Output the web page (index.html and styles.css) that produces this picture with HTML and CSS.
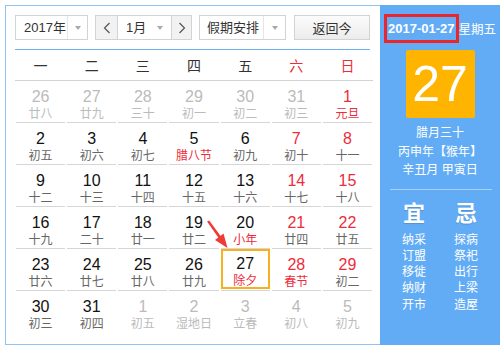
FILE: index.html
```html
<!DOCTYPE html>
<html lang="zh-CN">
<head>
    <meta charset="UTF-8">
    <meta name="viewport" content="width=device-width, initial-scale=1.0">
    <title>万年历</title>
    <link rel="stylesheet" href="styles.css">
</head>
<body>
    <div class="calendar">
        <!-- Left: month view -->
        <div class="main">
            <div class="toolbar">
                <div class="select year">
                    <span class="value">2017年</span>
                    <span class="arrow"><i class="tri"></i></span>
                </div>
                <div class="select month">
                    <span class="step prev">
                        <svg width="8" height="12" viewBox="0 0 8 12"><polyline points="6.5,1 1.5,6 6.5,11" fill="none" stroke="#555" stroke-width="1.2"/></svg>
                    </span>
                    <span class="value">1月</span>
                    <span class="arrow plain"><i class="tri"></i></span>
                    <span class="step next">
                        <svg width="8" height="12" viewBox="0 0 8 12"><polyline points="1.5,1 6.5,6 1.5,11" fill="none" stroke="#555" stroke-width="1.2"/></svg>
                    </span>
                </div>
                <div class="select holiday">
                    <span class="value">假期安排</span>
                    <span class="arrow"><i class="tri"></i></span>
                </div>
                <button class="today-btn">返回今</button>
            </div>
            <div class="rule"></div>

            <div class="weekdays">
                <span>一</span><span>二</span><span>三</span><span>四</span><span>五</span>
                <span class="red">六</span><span class="red">日</span>
            </div>

            <div class="days">
                <div class="cell other"><div class="num">26</div><div class="lunar">廿八</div></div>
                <div class="cell other"><div class="num">27</div><div class="lunar">廿九</div></div>
                <div class="cell other"><div class="num">28</div><div class="lunar">三十</div></div>
                <div class="cell other"><div class="num">29</div><div class="lunar">初一</div></div>
                <div class="cell other"><div class="num">30</div><div class="lunar">初二</div></div>
                <div class="cell other"><div class="num">31</div><div class="lunar">初三</div></div>
                <div class="cell weekend"><div class="num">1</div><div class="lunar fest">元旦</div></div>

                <div class="cell"><div class="num">2</div><div class="lunar">初五</div></div>
                <div class="cell"><div class="num">3</div><div class="lunar">初六</div></div>
                <div class="cell"><div class="num">4</div><div class="lunar">初七</div></div>
                <div class="cell"><div class="num">5</div><div class="lunar fest">腊八节</div></div>
                <div class="cell"><div class="num">6</div><div class="lunar">初九</div></div>
                <div class="cell weekend"><div class="num">7</div><div class="lunar">初十</div></div>
                <div class="cell weekend"><div class="num">8</div><div class="lunar">十一</div></div>

                <div class="cell"><div class="num">9</div><div class="lunar">十二</div></div>
                <div class="cell"><div class="num">10</div><div class="lunar">十三</div></div>
                <div class="cell"><div class="num">11</div><div class="lunar">十四</div></div>
                <div class="cell"><div class="num">12</div><div class="lunar">十五</div></div>
                <div class="cell"><div class="num">13</div><div class="lunar">十六</div></div>
                <div class="cell weekend"><div class="num">14</div><div class="lunar">十七</div></div>
                <div class="cell weekend"><div class="num">15</div><div class="lunar">十八</div></div>

                <div class="cell"><div class="num">16</div><div class="lunar">十九</div></div>
                <div class="cell"><div class="num">17</div><div class="lunar">二十</div></div>
                <div class="cell"><div class="num">18</div><div class="lunar">廿一</div></div>
                <div class="cell"><div class="num">19</div><div class="lunar">廿二</div></div>
                <div class="cell"><div class="num">20</div><div class="lunar fest">小年</div></div>
                <div class="cell weekend"><div class="num">21</div><div class="lunar">廿四</div></div>
                <div class="cell weekend"><div class="num">22</div><div class="lunar">廿五</div></div>

                <div class="cell"><div class="num">23</div><div class="lunar">廿六</div></div>
                <div class="cell"><div class="num">24</div><div class="lunar">廿七</div></div>
                <div class="cell"><div class="num">25</div><div class="lunar">廿八</div></div>
                <div class="cell"><div class="num">26</div><div class="lunar">廿九</div></div>
                <div class="cell today"><div class="box"><div class="num">27</div><div class="lunar fest">除夕</div></div></div>
                <div class="cell weekend"><div class="num">28</div><div class="lunar fest">春节</div></div>
                <div class="cell weekend"><div class="num">29</div><div class="lunar">初二</div></div>

                <div class="cell"><div class="num">30</div><div class="lunar">初三</div></div>
                <div class="cell"><div class="num">31</div><div class="lunar">初四</div></div>
                <div class="cell other"><div class="num">1</div><div class="lunar">初五</div></div>
                <div class="cell other"><div class="num">2</div><div class="lunar">湿地日</div></div>
                <div class="cell other"><div class="num">3</div><div class="lunar">立春</div></div>
                <div class="cell other"><div class="num">4</div><div class="lunar">初八</div></div>
                <div class="cell other"><div class="num">5</div><div class="lunar">初九</div></div>
            </div>
        </div>

        <!-- Right: selected day -->
        <div class="side">
            <div class="date-row">
                <span class="date">2017-01-27</span><span class="week">星期五</span>
            </div>
            <div class="day-big">27</div>
            <div class="lunar-info">
                <div>腊月三十</div>
                <div>丙申年【猴年】</div>
                <div>辛丑月 甲寅日</div>
            </div>
            <div class="divider"></div>
            <div class="yiji">
                <div class="col">
                    <div class="head">宜</div>
                    <div class="items">纳采<br>订盟<br>移徙<br>纳财<br>开市</div>
                </div>
                <div class="col">
                    <div class="head">忌</div>
                    <div class="items">探病<br>祭祀<br>出行<br>上梁<br>造屋</div>
                </div>
            </div>
        </div>
    </div>

    <!-- Annotation arrow pointing at today -->
    <svg class="pointer" width="500" height="350" viewBox="0 0 500 350">
        <polygon points="207,221.5 209.2,220.5 221,236.5 218.6,237.9" fill="#ee3b35"/>
        <polygon points="227.5,248 215,240 223.5,233.5" fill="#ee3b35"/>
    </svg>
</body>
</html>
```

FILE: styles.css
```css
body {
    margin: 0;
    padding: 5px 0 0 5px;
    background-color: #fff;
    font-family: "Liberation Sans", "Noto Sans CJK SC", sans-serif;
    color: #222;
}

.calendar {
    display: flex;
    width: 495px;
    height: 340px;
}

/* Left month view */
.main {
    width: 375px;
    box-sizing: border-box;
    border: 1px solid #8fc3f2;
    border-right: none;
    padding: 9px 7px 0 9px;
}

.toolbar {
    display: flex;
    height: 25px;
}

.select {
    display: flex;
    height: 25px;
    box-sizing: border-box;
    border: 1px solid #d3d3d3;
    background-color: #fff;
    font-size: 13px;
    color: #333;
    white-space: nowrap;
}

.select .value {
    flex: 1;
    line-height: 23px;
}

.select .arrow {
    display: flex;
    align-items: center;
    justify-content: center;
    flex-shrink: 0;
    border-left: 1px solid #e6e6e6;
}

.select .arrow.plain {
    border-left: none;
}

.tri {
    width: 0;
    height: 0;
    border-left: 3.5px solid transparent;
    border-right: 3.5px solid transparent;
    border-top: 4px solid #a8a8a8;
}

.year {
    width: 73px;
    margin-right: 7px;
}

.year .value {
    padding-left: 8px;
}

.year .arrow {
    width: 19px;
}

.month {
    width: 97px;
    margin-right: 7px;
}

.month .step {
    display: flex;
    align-items: center;
    justify-content: center;
    background-color: #f2f2f2;
}

.month .prev {
    width: 21px;
    border-right: 1px solid #d3d3d3;
}

.month .next {
    width: 19px;
    border-left: 1px solid #d3d3d3;
}

.month .value {
    padding-left: 8px;
}

.month .arrow {
    width: 22px;
}

.holiday {
    width: 87px;
    margin-right: 8px;
}

.holiday .value {
    padding-left: 7px;
}

.holiday .arrow {
    width: 21px;
}

.today-btn {
    width: 76px;
    height: 25px;
    padding: 0;
    border: 1px solid #d3d3d3;
    background: linear-gradient(#fbfbfb, #ececec);
    font-family: inherit;
    font-size: 13px;
    color: #333;
}

.rule {
    width: 355px;
    height: 1px;
    margin-top: 9px;
    background-color: #6db2f1;
}

.weekdays {
    display: grid;
    grid-template-columns: repeat(7, 1fr);
    height: 30px;
    border-bottom: 1px solid #d3d3d3;
    font-size: 14px;
    line-height: 32px;
    text-align: center;
    color: #333;
}

.weekdays .red {
    color: #ee2b3b;
}

.days {
    display: grid;
    grid-template-columns: repeat(7, 1fr);
}

.cell {
    height: 41px;
    margin: 0 1px;
    border-bottom: 1px solid #d6d6d6;
    text-align: center;
}

.days .cell:nth-last-child(-n+7) {
    border-bottom: none;
}

.num {
    padding-top: 7px;
    font-size: 16px;
    line-height: 18px;
    color: #111;
}

.lunar {
    font-size: 12px;
    line-height: 16px;
    color: #666;
}

.cell.weekend .num {
    color: #ee2b3b;
}

.lunar.fest {
    color: #ee2b3b;
}

.cell.other .num,
.cell.other .lunar {
    color: #bbb;
}

.cell.today .box {
    height: 40px;
    box-sizing: border-box;
    border: 2px solid #f7b120;
}

.cell.today .num {
    padding-top: 4px;
}

/* Right day panel */
.side {
    width: 120px;
    background-color: #62acf6;
    color: #fff;
}

.date-row {
    display: flex;
    align-items: center;
    margin: 9px 0 0 4px;
    font-size: 13px;
    white-space: nowrap;
}

.date {
    border: 3px solid #e8262b;
    padding: 0 1px;
    line-height: 23px;
    font-weight: bold;
}

.week {
    margin-left: 0;
    font-size: 12.5px;
}

.day-big {
    width: 69px;
    height: 68px;
    margin: 7px auto 0;
    border-radius: 2px;
    background-color: #ffb400;
    font-size: 50px;
    line-height: 68px;
    text-align: center;
}

.lunar-info {
    margin-top: 6px;
    font-size: 12px;
    line-height: 18.5px;
    text-align: center;
}

.divider {
    height: 1px;
    margin: 9px 8px 0 10px;
    background-color: rgba(255, 255, 255, 0.45);
}

.yiji {
    display: grid;
    grid-template-columns: 44px 44px;
    column-gap: 8px;
    justify-content: center;
    margin-top: 11px;
    text-align: center;
}

.yiji .head {
    font-size: 22px;
    font-weight: bold;
    line-height: 26px;
    text-shadow: 0 1px 1px rgba(0, 0, 0, 0.15);
}

.yiji .items {
    margin-top: 5px;
    font-size: 12px;
    line-height: 16.3px;
}

.pointer {
    position: absolute;
    top: 0;
    left: 0;
    pointer-events: none;
}
```
